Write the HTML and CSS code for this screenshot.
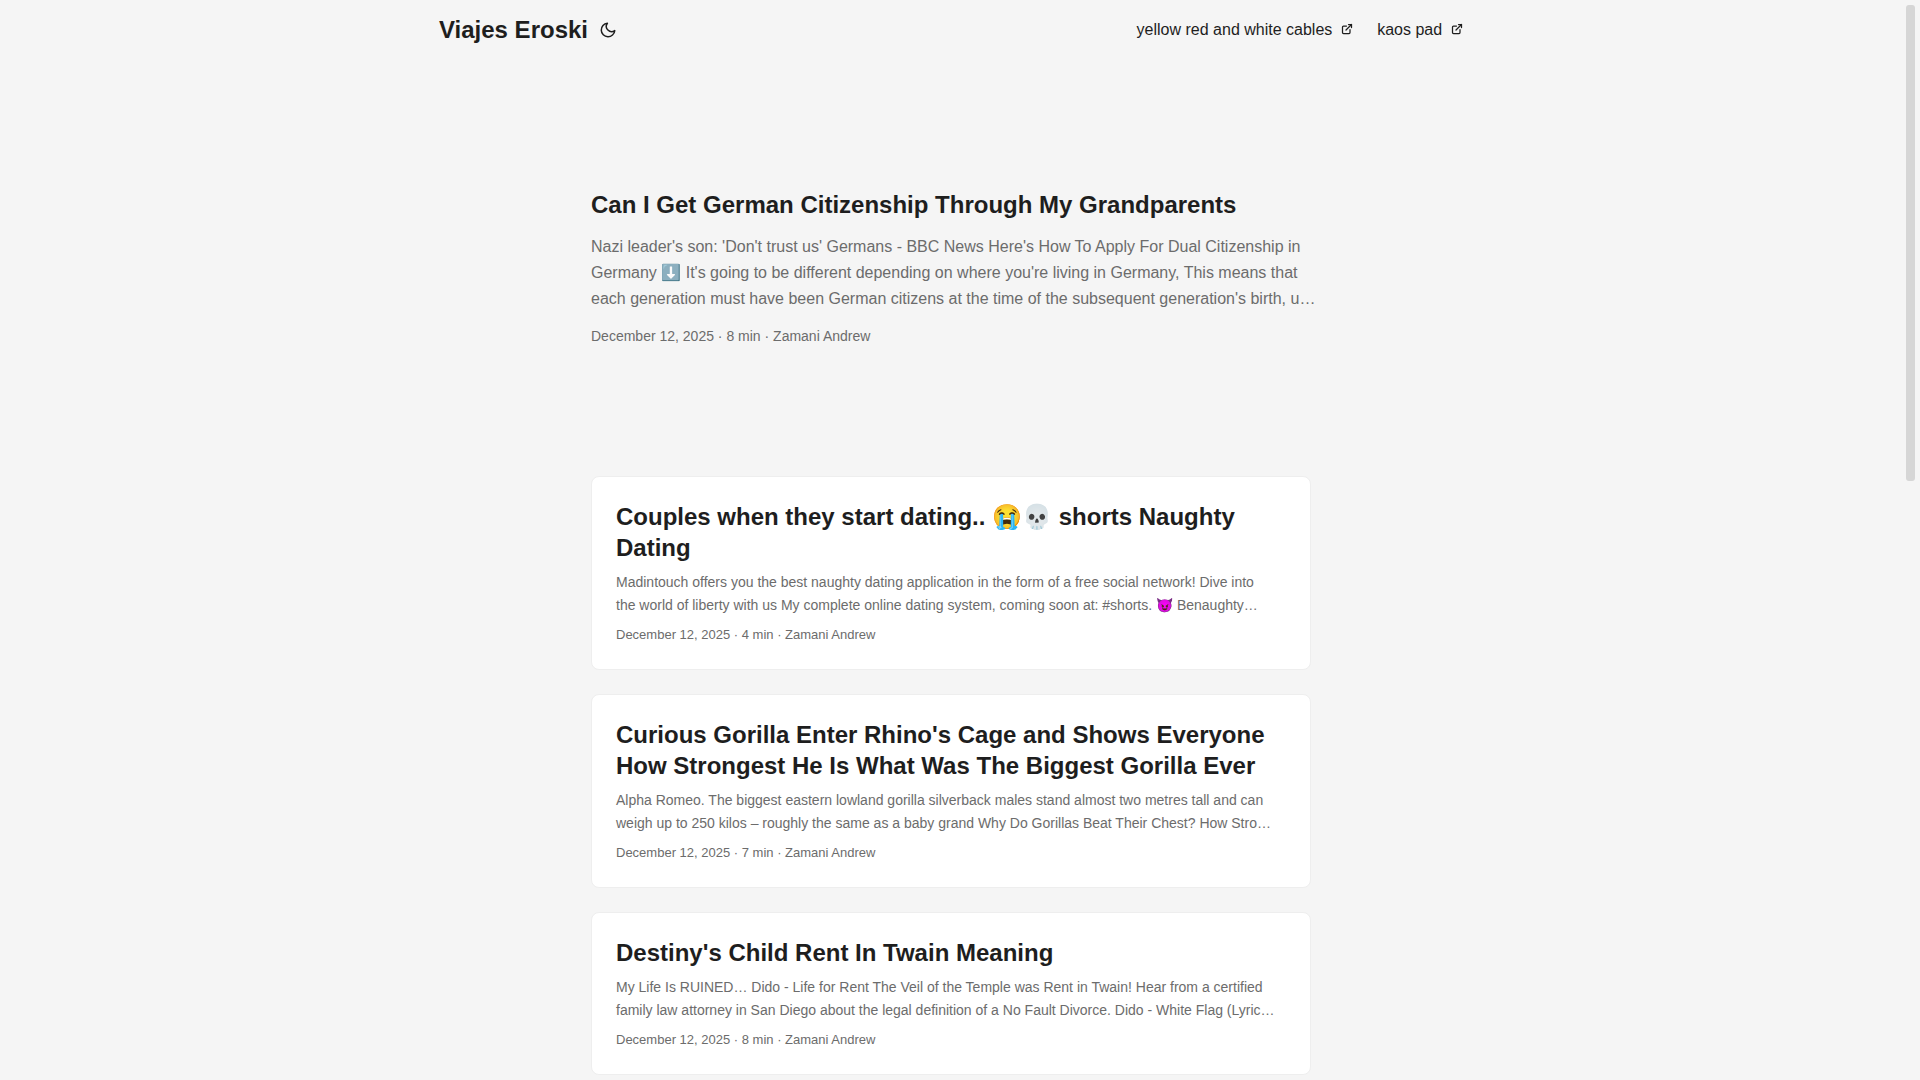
FILE: index.html
```
<!DOCTYPE html>
<html lang="en">
<head>
    <meta charset="utf-8">
    <meta name="viewport" content="width=device-width, initial-scale=1">
    <title>Viajes Eroski</title>
    <link rel="stylesheet" href="styles.css">
</head>
<body>
    <header class="header">
        <nav class="nav">
            <div class="logo">
                <a href="#">Viajes Eroski</a>
                <button class="theme-toggle" type="button" aria-label="Toggle theme">
                    <svg xmlns="http://www.w3.org/2000/svg" width="24" height="18" viewBox="0 0 24 24" fill="none" stroke="currentColor" stroke-width="2" stroke-linecap="round" stroke-linejoin="round">
                        <path d="M21 12.79A9 9 0 1 1 11.21 3 7 7 0 0 0 21 12.79z"></path>
                    </svg>
                </button>
            </div>
            <ul class="menu">
                <li>
                    <a href="#"><span>yellow red and white cables</span>&nbsp;
                        <svg fill="none" shape-rendering="geometricPrecision" stroke="currentColor" stroke-linecap="round" stroke-linejoin="round" stroke-width="2.5" viewBox="0 0 24 24" height="12" width="12">
                            <path d="M18 13v6a2 2 0 01-2 2H5a2 2 0 01-2-2V8a2 2 0 012-2h6"></path>
                            <path d="M15 3h6v6"></path>
                            <path d="M10 14L21 3"></path>
                        </svg>
                    </a>
                </li>
                <li>
                    <a href="#"><span>kaos pad</span>&nbsp;
                        <svg fill="none" shape-rendering="geometricPrecision" stroke="currentColor" stroke-linecap="round" stroke-linejoin="round" stroke-width="2.5" viewBox="0 0 24 24" height="12" width="12">
                            <path d="M18 13v6a2 2 0 01-2 2H5a2 2 0 01-2-2V8a2 2 0 012-2h6"></path>
                            <path d="M15 3h6v6"></path>
                            <path d="M10 14L21 3"></path>
                        </svg>
                    </a>
                </li>
            </ul>
        </nav>
    </header>

    <main class="main">
        <article class="first-entry">
            <h2 class="entry-title">Can I Get German Citizenship Through My Grandparents</h2>
            <p class="entry-content">Nazi leader's son: 'Don't trust us' Germans - BBC News Here's How To Apply For Dual Citizenship in Germany ⬇️ It's going to be different depending on where you're living in Germany, This means that each generation must have been German citizens at the time of the subsequent generation's birth, u…</p>
            <footer class="entry-footer">December 12, 2025&nbsp;·&nbsp;8 min&nbsp;·&nbsp;Zamani Andrew</footer>
        </article>

        <article class="post-entry">
            <h2 class="entry-title">Couples when they start dating.. 😭💀 shorts Naughty Dating</h2>
            <p class="entry-content">Madintouch offers you the best naughty dating application in the form of a free social network! Dive into<br>the world of liberty with us My complete online dating system, coming soon at: #shorts. 😈 Benaughty…</p>
            <footer class="entry-footer">December 12, 2025&nbsp;·&nbsp;4 min&nbsp;·&nbsp;Zamani Andrew</footer>
        </article>

        <article class="post-entry">
            <h2 class="entry-title">Curious Gorilla Enter Rhino's Cage and Shows Everyone How Strongest He Is What Was The Biggest Gorilla Ever</h2>
            <p class="entry-content">Alpha Romeo. The biggest eastern lowland gorilla silverback males stand almost two metres tall and can weigh up to 250 kilos – roughly the same as a baby grand Why Do Gorillas Beat Their Chest? How Stro…</p>
            <footer class="entry-footer">December 12, 2025&nbsp;·&nbsp;7 min&nbsp;·&nbsp;Zamani Andrew</footer>
        </article>

        <article class="post-entry">
            <h2 class="entry-title">Destiny's Child Rent In Twain Meaning</h2>
            <p class="entry-content">My Life Is RUINED… Dido - Life for Rent The Veil of the Temple was Rent in Twain! Hear from a certified family law attorney in San Diego about the legal definition of a No Fault Divorce. Dido - White Flag (Lyric…</p>
            <footer class="entry-footer">December 12, 2025&nbsp;·&nbsp;8 min&nbsp;·&nbsp;Zamani Andrew</footer>
        </article>
    </main>

    <div class="scrollbar" aria-hidden="true">
        <div class="scrollbar-thumb"></div>
    </div>
</body>
</html>
```
FILE: styles.css
```
:root {
    --gap: 24px;
    --nav-width: 1024px;
    --main-width: 720px;
    --header-height: 60px;
    --scrollbar-width: 18px;
    --theme: rgb(245, 245, 245);
    --entry: rgb(255, 255, 255);
    --primary: rgb(30, 30, 30);
    --secondary: rgb(108, 108, 108);
    --tertiary: rgb(214, 214, 214);
    --border: rgb(238, 238, 238);
}

* {
    box-sizing: border-box;
    margin: 0;
    padding: 0;
}

body {
    padding-right: var(--scrollbar-width);
    background: var(--theme);
    color: var(--primary);
    font-family: "Liberation Sans", Arial, sans-serif;
    font-size: 18px;
    line-height: 26px;
    word-break: break-word;
}

a {
    color: inherit;
    text-decoration: none;
}

/* Header */
.nav {
    display: flex;
    flex-wrap: wrap;
    justify-content: space-between;
    max-width: calc(var(--nav-width) + var(--gap) * 2);
    margin: 0 auto;
    padding: 0 var(--gap);
    line-height: var(--header-height);
}

.logo {
    display: flex;
    align-items: center;
    gap: 8px;
    font-size: 24px;
    font-weight: 700;
}

.theme-toggle {
    display: flex;
    border: none;
    background: none;
    color: inherit;
    cursor: pointer;
}

.menu {
    display: flex;
    gap: var(--gap);
    list-style: none;
    font-size: 16px;
}

/* Posts */
.main {
    max-width: calc(var(--main-width) + var(--gap) * 2);
    margin: 0 auto;
    padding: var(--gap) var(--gap) 0;
}

.entry-title {
    font-size: 24px;
    line-height: 31px;
}

.entry-content {
    margin: 8px 0 7px;
    color: var(--secondary);
    font-size: 14px;
    line-height: 23px;
}

.entry-footer {
    color: var(--secondary);
    font-size: 13px;
    line-height: 21px;
}

.first-entry {
    display: flex;
    flex-direction: column;
    justify-content: center;
    min-height: 320px;
    margin: var(--gap) 0 calc(var(--gap) * 2);
}

/* runs slightly into the right gutter */
.first-entry .entry-content {
    margin: 14px -8px 13px 0;
    font-size: 16px;
    line-height: 26px;
}

.first-entry .entry-footer {
    font-size: 14px;
    line-height: 22px;
}

.post-entry {
    padding: var(--gap);
    border: 1px solid var(--border);
    border-radius: 8px;
    background: var(--entry);
}

.post-entry + .post-entry {
    margin-top: var(--gap);
}

/* Scrollbar */
.scrollbar {
    position: fixed;
    top: 0;
    right: 0;
    bottom: 0;
    width: var(--scrollbar-width);
    padding: 5px 5px 5px 4px;
}

.scrollbar-thumb {
    height: 476px;
    border-radius: 3px;
    background: var(--tertiary);
}
```
